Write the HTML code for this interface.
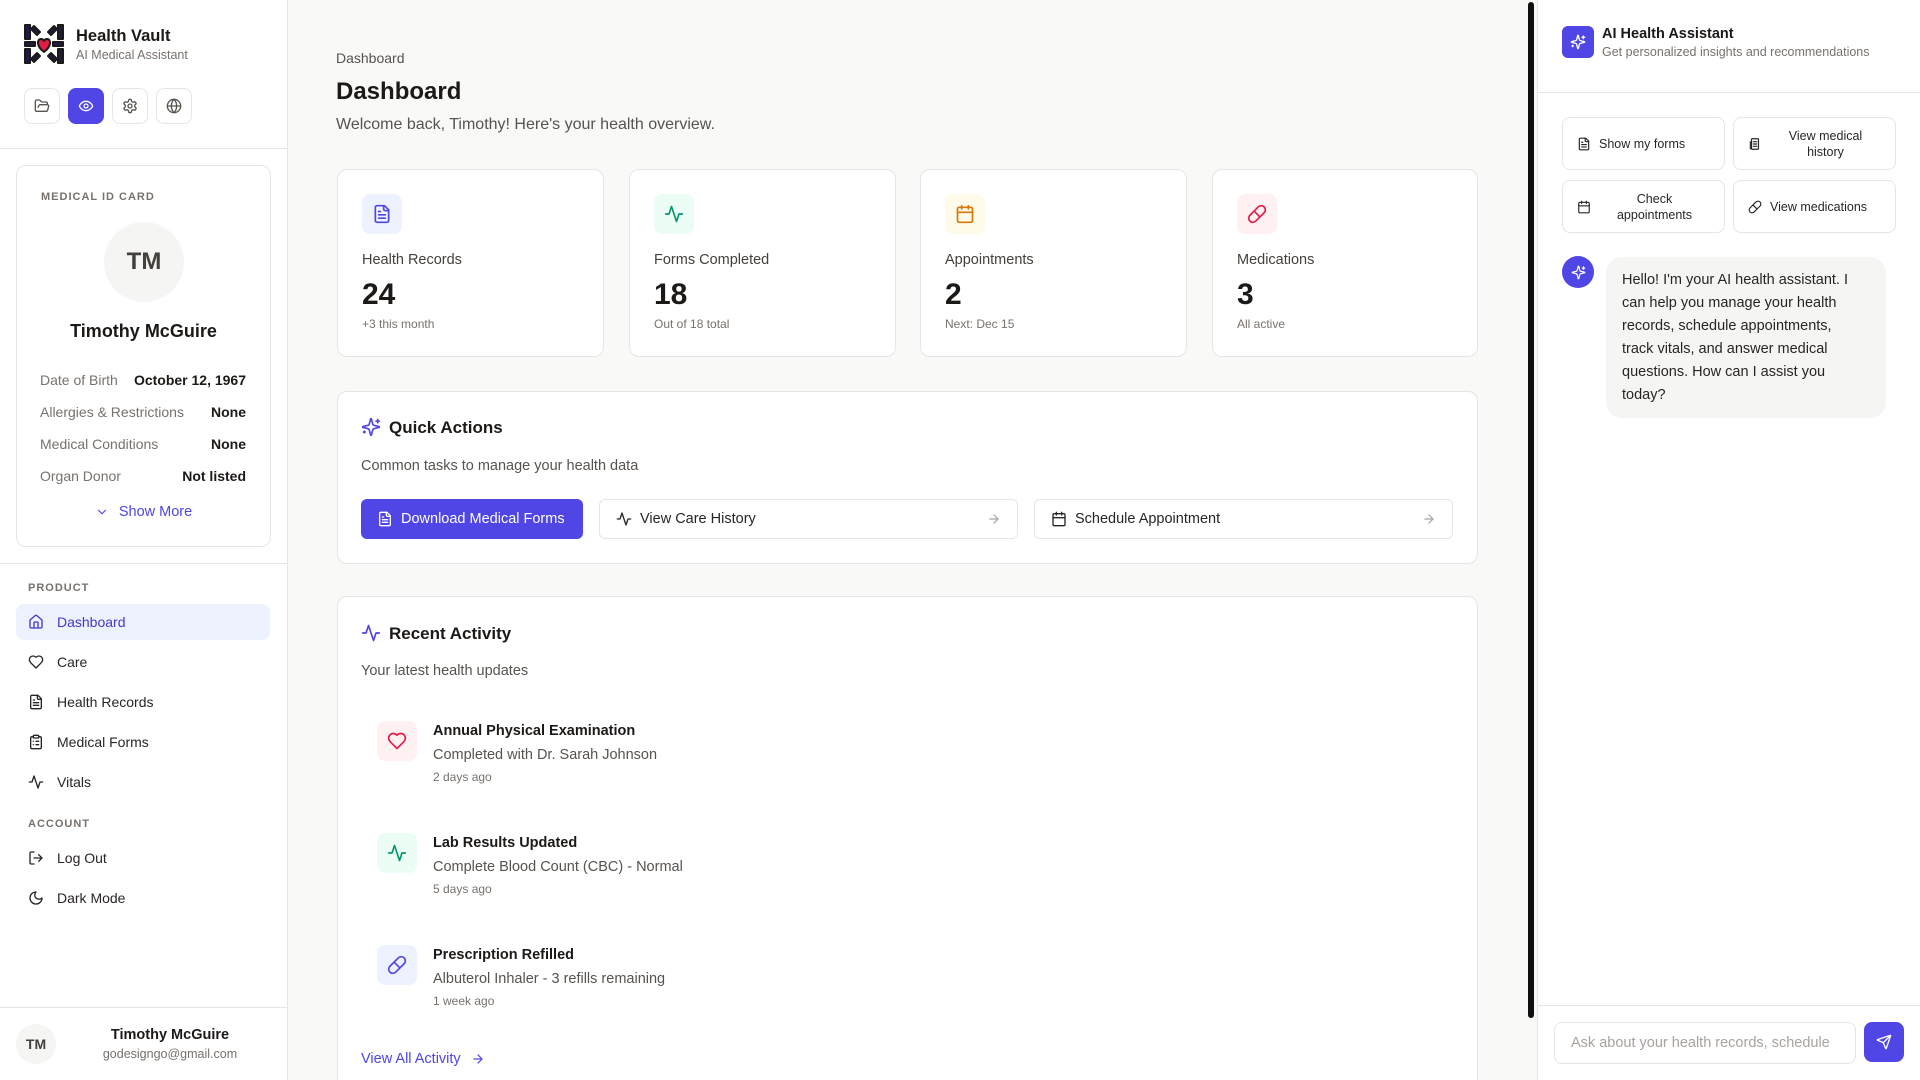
<!DOCTYPE html>
<html><head><meta charset="utf-8"><style>
*{box-sizing:border-box;margin:0;padding:0}
html,body{width:1920px;height:1080px;overflow:hidden}
body{background:#f9f9f8;font-family:"Liberation Sans",sans-serif;color:#1c1917;position:relative}
#root{position:absolute;left:0;top:0;width:1920px;height:1080px;overflow:hidden}
.a{position:absolute}
svg{display:block;fill:none;stroke:currentColor;stroke-width:2;stroke-linecap:round;stroke-linejoin:round}
.side{left:0;top:0;width:288px;height:1080px;background:#fff;border-right:1px solid #e7e5e4}
.ib{width:36px;height:36px;border:1px solid #e7e5e4;border-radius:8px;display:flex;align-items:center;justify-content:center;color:#57534e;background:#fff}
.card{background:#fff;border:1px solid #e7e5e4;border-radius:10px}
.lbl{font-size:11px;letter-spacing:1px;color:#78716c;font-weight:bold}
.row{left:40px;width:206px;display:flex;justify-content:space-between;font-size:14px}
.row span:first-child{color:#78716c}.row span:last-child{color:#1c1917;font-weight:bold}
.nav{left:16px;width:254px;height:36px;border-radius:8px;display:flex;align-items:center;padding-left:12px;font-size:14px;color:#292524;gap:13px}
.nav svg{width:16px;height:16px}
.stat{top:169px;width:267px;height:188px}
.sico{position:absolute;left:24px;top:24px;width:40px;height:40px;border-radius:8px;display:flex;align-items:center;justify-content:center}
.sico svg{width:20px;height:20px}
.sl{position:absolute;left:24px;top:82px;font-size:14.5px;color:#44403c}
.sn{position:absolute;left:24px;top:108px;font-size:30px;font-weight:bold}
.ss{position:absolute;left:24px;top:147px;font-size:12px;color:#78716c}
.btn{top:499px;height:40px;border-radius:6px;display:flex;align-items:center;font-size:14.5px;padding:0 16px;gap:8px}
.btn svg{width:16px;height:16px}
.act{left:377px;width:40px;height:40px;border-radius:8px;display:flex;align-items:center;justify-content:center}
.act svg{width:20px;height:20px}
.at{left:433px;font-size:14.5px;font-weight:bold}
.ad{left:433px;font-size:14.5px;color:#57534e}
.am{left:433px;font-size:12px;color:#78716c}
.qb{width:163px;height:53px;border:1px solid #e7e5e4;border-radius:8px;background:#fff;display:flex;align-items:center;padding:0 14px;font-size:12.5px;color:#292524;gap:8px}
.qb svg{width:14px;height:14px;flex:none}
.qb span{flex:1;text-align:center;line-height:16px}
</style></head><body><div id="root">

<div class="a side">
  <svg class="a" style="left:24px;top:24px;width:40px;height:40px" viewBox="0 0 40 40" stroke="none">
    <g fill="#1e1b4b">
      <rect x="1" y="1" width="5" height="14"/><rect x="1" y="25" width="5" height="14"/><rect x="34" y="1" width="5" height="14"/><rect x="34" y="25" width="5" height="14"/>
      <path d="M10 2 L16 8 L13 11 L7 5Z M30 2 L24 8 L27 11 L33 5Z M10 38 L16 32 L13 29 L7 35Z M30 38 L24 32 L27 29 L33 35Z"/>
      <rect x="1" y="18" width="10" height="4"/><rect x="29" y="18" width="10" height="4"/>
    </g>
    <path d="M20 28 C12 22 13 15 17 15 C19 15 20 17 20 17 C20 17 21 15 23 15 C27 15 28 22 20 28Z" fill="#e11d48"/>
  </svg>
  <div class="a" style="left:76px;top:27px;font-size:16.5px;font-weight:bold">Health Vault</div>
  <div class="a" style="left:76px;top:48px;font-size:12.5px;color:#78716c">AI Medical Assistant</div>
  <div class="a ib" style="left:24px;top:88px"><svg width="16" height="16" viewBox="0 0 24 24"><path d="m6 14 1.5-2.9A2 2 0 0 1 9.24 10H20a2 2 0 0 1 1.94 2.5l-1.54 6a2 2 0 0 1-1.95 1.5H4a2 2 0 0 1-2-2V5a2 2 0 0 1 2-2h3.9a2 2 0 0 1 1.690.9l.81 1.2a2 2 0 0 0 1.670.9H18a2 2 0 0 1 2 2v2"/></svg></div>
  <div class="a ib" style="left:68px;top:88px;background:#4f46e5;border-color:#4f46e5;color:#fff"><svg width="16" height="16" viewBox="0 0 24 24"><path d="M2 12s3-7 10-7 10 7 10 7-3 7-10 7-10-7-10-7Z"/><circle cx="12" cy="12" r="3"/></svg></div>
  <div class="a ib" style="left:112px;top:88px"><svg width="16" height="16" viewBox="0 0 24 24"><path d="M12.22 2h-.44a2 2 0 0 0-2 2v.18a2 2 0 0 1-1 1.73l-.43.25a2 2 0 0 1-2 0l-.15-.08a2 2 0 0 0-2.73.73l-.22.38a2 2 0 0 0 .73 2.730l.15.1a2 2 0 0 1 1 1.720v.51a2 2 0 0 1-1 1.740l-.15.09a2 2 0 0 0-.73 2.730l.22.38a2 2 0 0 0 2.730.73l.15-.08a2 2 0 0 1 2 0l.43.25a2 2 0 0 1 1 1.730V20a2 2 0 0 0 2 2h.44a2 2 0 0 0 2-2v-.18a2 2 0 0 1 1-1.730l.43-.25a2 2 0 0 1 2 0l.15.08a2 2 0 0 0 2.730-.73l.22-.39a2 2 0 0 0-.73-2.730l-.15-.08a2 2 0 0 1-1-1.740v-.5a2 2 0 0 1 1-1.740l.15-.09a2 2 0 0 0 .73-2.730l-.22-.38a2 2 0 0 0-2.730-.73l-.15.08a2 2 0 0 1-2 0l-.43-.25a2 2 0 0 1-1-1.730V4a2 2 0 0 0-2-2z"/><circle cx="12" cy="12" r="3"/></svg></div>
  <div class="a ib" style="left:156px;top:88px"><svg width="16" height="16" viewBox="0 0 24 24"><circle cx="12" cy="12" r="10"/><path d="M12 2a14.5 14.5 0 0 0 0 20 14.5 14.5 0 0 0 0-20M2 12h20"/></svg></div>
  <div class="a" style="left:0;top:148px;width:287px;border-top:1px solid #e7e5e4"></div>

  <div class="a card" style="left:16px;top:165px;width:255px;height:382px"></div>
  <div class="a lbl" style="left:41px;top:191px">MEDICAL ID CARD</div>
  <div class="a" style="left:104px;top:222px;width:80px;height:80px;border-radius:50%;background:#f5f5f4;display:flex;align-items:center;justify-content:center;font-size:24px;font-weight:bold;color:#44403c">TM</div>
  <div class="a" style="left:16px;top:321px;width:255px;text-align:center;font-size:18px;font-weight:bold">Timothy McGuire</div>
  <div class="a row" style="top:372px"><span>Date of Birth</span><span>October 12, 1967</span></div>
  <div class="a row" style="top:404px"><span>Allergies &amp; Restrictions</span><span>None</span></div>
  <div class="a row" style="top:436px"><span>Medical Conditions</span><span>None</span></div>
  <div class="a row" style="top:468px"><span>Organ Donor</span><span>Not listed</span></div>
  <div class="a" style="left:16px;top:504px;width:255px;display:flex;justify-content:center;align-items:center;gap:10px;color:#4f46e5;font-size:14.5px"><svg width="14" height="14" viewBox="0 0 24 24"><path d="m6 9 6 6 6-6"/></svg>Show More</div>
  <div class="a" style="left:0;top:563px;width:287px;border-top:1px solid #e7e5e4"></div>

  <div class="a lbl" style="left:28px;top:582px">PRODUCT</div>
  <div class="a nav" style="top:604px;background:#eef2ff;color:#4338ca"><svg viewBox="0 0 24 24"><path d="M15 21v-8a1 1 0 0 0-1-1h-4a1 1 0 0 0-1 1v8"/><path d="M3 10a2 2 0 0 1 .7-1.5l7-6a2 2 0 0 1 2.6 0l7 6A2 2 0 0 1 21 10v9a2 2 0 0 1-2 2H5a2 2 0 0 1-2-2z"/></svg>Dashboard</div>
  <div class="a nav" style="top:644px"><svg viewBox="0 0 24 24"><path d="M19 14c1.49-1.46 3-3.21 3-5.5A5.5 5.5 0 0 0 16.5 3c-1.76 0-3 .5-4.5 2-1.5-1.5-2.74-2-4.5-2A5.5 5.5 0 0 0 2 8.5c0 2.3 1.5 4.05 3 5.5l7 7Z"/></svg>Care</div>
  <div class="a nav" style="top:684px"><svg viewBox="0 0 24 24"><path d="M15 2H6a2 2 0 0 0-2 2v16a2 2 0 0 0 2 2h12a2 2 0 0 0 2-2V7Z"/><path d="M14 2v4a2 2 0 0 0 2 2h4M10 9H8M16 13H8M16 17H8"/></svg>Health Records</div>
  <div class="a nav" style="top:724px"><svg viewBox="0 0 24 24"><rect x="8" y="2" width="8" height="4" rx="1"/><path d="M16 4h2a2 2 0 0 1 2 2v14a2 2 0 0 1-2 2H6a2 2 0 0 1-2-2V6a2 2 0 0 1 2-2h2M12 11h4M12 16h4M8 11h.01M8 16h.01"/></svg>Medical Forms</div>
  <div class="a nav" style="top:764px"><svg viewBox="0 0 24 24"><path d="M22 12h-4l-3 9L9 3l-3 9H2"/></svg>Vitals</div>
  <div class="a lbl" style="left:28px;top:818px">ACCOUNT</div>
  <div class="a nav" style="top:840px"><svg viewBox="0 0 24 24"><path d="M9 21H5a2 2 0 0 1-2-2V5a2 2 0 0 1 2-2h4M16 17l5-5-5-5M21 12H9"/></svg>Log Out</div>
  <div class="a nav" style="top:880px"><svg viewBox="0 0 24 24"><path d="M12 3a6 6 0 0 0 9 9 9 9 0 1 1-9-9Z"/></svg>Dark Mode</div>
  <div class="a" style="left:0;top:1007px;width:287px;border-top:1px solid #e7e5e4"></div>
  <div class="a" style="left:16px;top:1024px;width:40px;height:40px;border-radius:50%;background:#f5f5f4;display:flex;align-items:center;justify-content:center;font-size:14px;font-weight:bold;color:#44403c">TM</div>
  <div class="a" style="left:70px;top:1027px;width:200px;text-align:center;font-size:14.5px;font-weight:bold">Timothy McGuire</div>
  <div class="a" style="left:70px;top:1047px;width:200px;text-align:center;font-size:12.5px;color:#78716c">godesigngo@gmail.com</div>
</div>

<div class="a" style="left:336px;top:50px;font-size:14px;color:#57534e">Dashboard</div>
<div class="a" style="left:336px;top:78px;font-size:24px;font-weight:bold">Dashboard</div>
<div class="a" style="left:336px;top:116px;font-size:16px;color:#57534e">Welcome back, Timothy! Here's your health overview.</div>

<div class="a card stat" style="left:337px"><div class="sico" style="background:#eef2ff;color:#4f46e5"><svg viewBox="0 0 24 24"><path d="M15 2H6a2 2 0 0 0-2 2v16a2 2 0 0 0 2 2h12a2 2 0 0 0 2-2V7Z"/><path d="M14 2v4a2 2 0 0 0 2 2h4M10 9H8M16 13H8M16 17H8"/></svg></div><div class="sl">Health Records</div><div class="sn">24</div><div class="ss">+3 this month</div></div>
<div class="a card stat" style="left:629px"><div class="sico" style="background:#ecfdf5;color:#059669"><svg viewBox="0 0 24 24"><path d="M22 12h-4l-3 9L9 3l-3 9H2"/></svg></div><div class="sl">Forms Completed</div><div class="sn">18</div><div class="ss">Out of 18 total</div></div>
<div class="a card stat" style="left:920px"><div class="sico" style="background:#fffbeb;color:#d97706"><svg viewBox="0 0 24 24"><rect x="3" y="4" width="18" height="18" rx="2"/><path d="M16 2v4M8 2v4M3 10h18"/></svg></div><div class="sl">Appointments</div><div class="sn">2</div><div class="ss">Next: Dec 15</div></div>
<div class="a card stat" style="left:1212px;width:266px"><div class="sico" style="background:#fff1f2;color:#e11d48"><svg viewBox="0 0 24 24"><path d="m10.5 20.5 10-10a4.95 4.95 0 1 0-7-7l-10 10a4.95 4.95 0 1 0 7 7ZM8.5 8.5l7 7"/></svg></div><div class="sl">Medications</div><div class="sn">3</div><div class="ss">All active</div></div>

<div class="a card" style="left:337px;top:391px;width:1141px;height:173px"></div>
<svg class="a" style="left:361px;top:417px;width:20px;height:20px;color:#4f46e5" viewBox="0 0 24 24"><path d="M9.94 15.5A2 2 0 0 0 8.5 14.06l-6.14-1.58a.5.5 0 0 1 0-.96L8.5 9.94A2 2 0 0 0 9.94 8.5l1.58-6.14a.5.5 0 0 1 .96 0l1.58 6.14a2 2 0 0 0 1.44 1.44l6.14 1.58a.5.5 0 0 1 0 .96l-6.14 1.58a2 2 0 0 0-1.44 1.44l-1.58 6.14a.5.5 0 0 1-.96 0z"/><path d="M20 3v4M22 5h-4M4 17v2M5 18H3"/></svg>
<div class="a" style="left:389px;top:418px;font-size:17px;font-weight:bold">Quick Actions</div>
<div class="a" style="left:361px;top:458px;font-size:14.5px;color:#57534e">Common tasks to manage your health data</div>
<div class="a btn" style="left:361px;width:222px;background:#4f46e5;color:#fff"><svg viewBox="0 0 24 24"><path d="M15 2H6a2 2 0 0 0-2 2v16a2 2 0 0 0 2 2h12a2 2 0 0 0 2-2V7Z"/><path d="M14 2v4a2 2 0 0 0 2 2h4M10 9H8M16 13H8M16 17H8"/></svg>Download Medical Forms</div>
<div class="a btn" style="left:599px;width:419px;background:#fff;border:1px solid #e7e5e4;color:#292524"><svg viewBox="0 0 24 24"><path d="M22 12h-4l-3 9L9 3l-3 9H2"/></svg><span style="flex:1">View Care History</span><svg viewBox="0 0 24 24" style="width:14px;color:#a8a29e"><path d="M5 12h14M12 5l7 7-7 7"/></svg></div>
<div class="a btn" style="left:1034px;width:419px;background:#fff;border:1px solid #e7e5e4;color:#292524"><svg viewBox="0 0 24 24"><rect x="3" y="4" width="18" height="18" rx="2"/><path d="M16 2v4M8 2v4M3 10h18"/></svg><span style="flex:1">Schedule Appointment</span><svg viewBox="0 0 24 24" style="width:14px;color:#a8a29e"><path d="M5 12h14M12 5l7 7-7 7"/></svg></div>

<div class="a card" style="left:337px;top:596px;width:1141px;height:500px"></div>
<svg class="a" style="left:361px;top:623px;width:20px;height:20px;color:#4f46e5" viewBox="0 0 24 24"><path d="M22 12h-4l-3 9L9 3l-3 9H2"/></svg>
<div class="a" style="left:389px;top:624px;font-size:17px;font-weight:bold">Recent Activity</div>
<div class="a" style="left:361px;top:663px;font-size:14.5px;color:#57534e">Your latest health updates</div>

<div class="a act" style="top:721px;background:#fff1f2;color:#e11d48"><svg viewBox="0 0 24 24"><path d="M19 14c1.49-1.46 3-3.21 3-5.5A5.5 5.5 0 0 0 16.5 3c-1.76 0-3 .5-4.5 2-1.5-1.5-2.74-2-4.5-2A5.5 5.5 0 0 0 2 8.5c0 2.3 1.5 4.05 3 5.5l7 7Z"/></svg></div>
<div class="a at" style="top:723px">Annual Physical Examination</div>
<div class="a ad" style="top:747px">Completed with Dr. Sarah Johnson</div>
<div class="a am" style="top:770px">2 days ago</div>
<div class="a act" style="top:833px;background:#ecfdf5;color:#059669"><svg viewBox="0 0 24 24"><path d="M22 12h-4l-3 9L9 3l-3 9H2"/></svg></div>
<div class="a at" style="top:835px">Lab Results Updated</div>
<div class="a ad" style="top:859px">Complete Blood Count (CBC) - Normal</div>
<div class="a am" style="top:882px">5 days ago</div>
<div class="a act" style="top:945px;background:#eef2ff;color:#4f46e5"><svg viewBox="0 0 24 24"><path d="m10.5 20.5 10-10a4.95 4.95 0 1 0-7-7l-10 10a4.95 4.95 0 1 0 7 7ZM8.5 8.5l7 7"/></svg></div>
<div class="a at" style="top:947px">Prescription Refilled</div>
<div class="a ad" style="top:971px">Albuterol Inhaler - 3 refills remaining</div>
<div class="a am" style="top:994px">1 week ago</div>
<div class="a" style="left:361px;top:1051px;font-size:14.5px;color:#4f46e5;display:flex;align-items:center;gap:10px">View All Activity<svg width="14" height="14" viewBox="0 0 24 24"><path d="M5 12h14M12 5l7 7-7 7"/></svg></div>

<div class="a" style="left:1528px;top:2px;width:6px;height:1016px;background:#111;border-radius:3px"></div>
<div class="a" style="left:1537px;top:0;width:383px;height:1080px;background:#fff;border-left:1px solid #e7e5e4"></div>
<div class="a" style="left:1562px;top:26px;width:32px;height:32px;border-radius:6px;background:#4f46e5;color:#fff;display:flex;align-items:center;justify-content:center"><svg width="16" height="16" viewBox="0 0 24 24"><path d="M9.94 15.5A2 2 0 0 0 8.5 14.06l-6.14-1.58a.5.5 0 0 1 0-.96L8.5 9.94A2 2 0 0 0 9.94 8.5l1.58-6.14a.5.5 0 0 1 .96 0l1.58 6.14a2 2 0 0 0 1.44 1.44l6.14 1.58a.5.5 0 0 1 0 .96l-6.14 1.58a2 2 0 0 0-1.44 1.44l-1.58 6.14a.5.5 0 0 1-.96 0z"/><path d="M20 3v4M22 5h-4M4 17v2M5 18H3"/></svg></div>
<div class="a" style="left:1602px;top:26px;font-size:14.5px;font-weight:bold">AI Health Assistant</div>
<div class="a" style="left:1602px;top:45px;font-size:12.5px;color:#78716c">Get personalized insights and recommendations</div>
<div class="a" style="left:1537px;top:92px;width:383px;border-top:1px solid #e7e5e4"></div>
<div class="a qb" style="left:1562px;top:117px"><svg viewBox="0 0 24 24"><path d="M15 2H6a2 2 0 0 0-2 2v16a2 2 0 0 0 2 2h12a2 2 0 0 0 2-2V7Z"/><path d="M14 2v4a2 2 0 0 0 2 2h4M10 9H8M16 13H8M16 17H8"/></svg><span style="text-align:left">Show my forms</span></div>
<div class="a qb" style="left:1733px;top:117px"><svg viewBox="0 0 24 24"><rect x="6" y="3" width="12" height="18" rx="1"/><path d="M4 8v12h2M9 8h6M9 12h6M9 16h6"/></svg><span>View medical history</span></div>
<div class="a qb" style="left:1562px;top:180px"><svg viewBox="0 0 24 24"><rect x="3" y="4" width="18" height="18" rx="2"/><path d="M16 2v4M8 2v4M3 10h18"/></svg><span>Check appointments</span></div>
<div class="a qb" style="left:1733px;top:180px"><svg viewBox="0 0 24 24"><path d="m10.5 20.5 10-10a4.95 4.95 0 1 0-7-7l-10 10a4.95 4.95 0 1 0 7 7ZM8.5 8.5l7 7"/></svg><span style="text-align:left">View medications</span></div>
<div class="a" style="left:1562px;top:256px;width:32px;height:32px;border-radius:50%;background:#4f46e5;color:#fff;display:flex;align-items:center;justify-content:center"><svg width="15" height="15" viewBox="0 0 24 24"><path d="M9.94 15.5A2 2 0 0 0 8.5 14.06l-6.14-1.58a.5.5 0 0 1 0-.96L8.5 9.94A2 2 0 0 0 9.94 8.5l1.58-6.14a.5.5 0 0 1 .96 0l1.58 6.14a2 2 0 0 0 1.44 1.44l6.14 1.58a.5.5 0 0 1 0 .96l-6.14 1.58a2 2 0 0 0-1.44 1.44l-1.58 6.14a.5.5 0 0 1-.96 0z"/><path d="M20 3v4M22 5h-4"/></svg></div>
<div class="a" style="left:1606px;top:257px;width:280px;height:161px;border-radius:16px;background:#f5f5f4;padding:12px 26px 11px 16px;font-size:14.5px;line-height:23px;color:#292524">Hello! I'm your AI health assistant. I can help you manage your health records, schedule appointments, track vitals, and answer medical questions. How can I assist you today?</div>
<div class="a" style="left:1537px;top:1005px;width:383px;border-top:1px solid #e7e5e4"></div>
<div class="a" style="left:1554px;top:1022px;width:302px;height:42px;border:1px solid #e7e5e4;border-radius:8px;padding:0 16px;display:flex;align-items:center;font-size:14.5px;color:#a8a29e;white-space:nowrap;overflow:hidden">Ask about your health records, schedule</div>
<div class="a" style="left:1864px;top:1022px;width:40px;height:40px;border-radius:8px;background:#4f46e5;color:#fff;display:flex;align-items:center;justify-content:center"><svg width="16" height="16" viewBox="0 0 24 24"><path d="M14.5 21.7a.5.5 0 0 0 .9-.1l6.5-19a.5.5 0 0 0-.6-.6l-19 6.5a.5.5 0 0 0-.1.9l7.9 3.2a2 2 0 0 1 1.1 1.1zM21.9 2.1 10.9 13.1"/></svg></div>
</div></body></html>
